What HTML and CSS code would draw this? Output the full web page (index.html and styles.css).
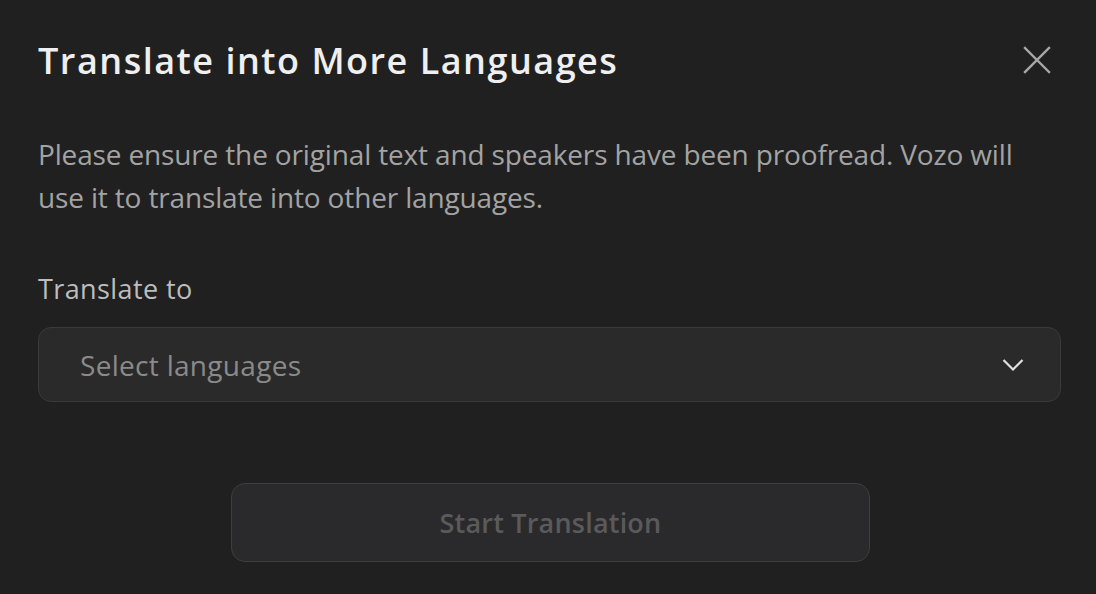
FILE: index.html
```html
<!DOCTYPE html>
<html>
<head>
<meta charset="utf-8">
<link rel="stylesheet" href="styles.css">
</head>
<body>
<div class="dialog">
  <div class="header">
    <h1 class="title">Translate into More Languages</h1>
    <button class="close" aria-label="Close">
      <svg width="28" height="28" viewBox="0 0 28 28"><path d="M2 2 L26 26 M26 2 L2 26" stroke="#a8a8a8" stroke-width="2.4" stroke-linecap="square" fill="none"/></svg>
    </button>
  </div>
  <p class="desc">Please ensure the original text and speakers have been proofread. Vozo will use it to translate into other languages.</p>
  <div class="label">Translate to</div>
  <div class="select">
    <span class="placeholder">Select languages</span>
    <svg class="chevron" width="22" height="14" viewBox="0 0 22 14"><path d="M1.5 2 L11 11.5 L20.5 2" stroke="#e0e0e0" stroke-width="2.2" fill="none"/></svg>
  </div>
  <div class="actions">
    <button class="start">Start Translation</button>
  </div>
</div>
</body>
</html>
```
FILE: styles.css
```css
html, body {
  margin: 0;
  padding: 0;
  background: #202020;
}
body {
  font-family: "Open Sans", "Noto Sans", sans-serif;
  width: 1096px;
  height: 594px;
  overflow: hidden;
}
.dialog {
  padding: 30px 35px 0 38px;
}
.header {
  display: flex;
  align-items: center;
  justify-content: space-between;
  height: 60px;
}
.title {
  margin: 0;
  font-size: 36px;
  font-weight: 600;
  color: #efefef;
  letter-spacing: 1.5px;
}
.close {
  background: none;
  border: none;
  padding: 0;
  margin-right: 10px;
  width: 28px;
  height: 28px;
  display: flex;
}
.desc {
  margin: 43px 0 0;
  font-size: 28px;
  letter-spacing: -0.15px;
  line-height: 43px;
  color: #a3a3a3;
  max-width: 1000px;
}
.label {
  margin-top: 50px;
  font-size: 27px;
  letter-spacing: 0.4px;
  line-height: 40px;
  color: #bdbdbd;
}
.select {
  margin-top: 18px;
  box-sizing: border-box;
  height: 75px;
  border: 1.5px solid #3a3a3a;
  border-radius: 13px;
  background: #2a2a2a;
  display: flex;
  align-items: center;
  justify-content: space-between;
  padding: 0 36px 0 41px;
}
.placeholder {
  font-size: 28px;
  letter-spacing: 0.3px;
  color: #8a8a8a;
}
.actions {
  display: flex;
  justify-content: center;
  margin-top: 81px;
  padding-left: 2px;
}
.start {
  width: 639px;
  height: 79px;
  box-sizing: border-box;
  border: 1.5px solid #3e3e3e;
  border-radius: 14px;
  background: #2a2a2c;
  color: #5a5a5a;
  font-family: inherit;
  font-size: 27px;
  letter-spacing: 0.2px;
  font-weight: 600;
}
```
